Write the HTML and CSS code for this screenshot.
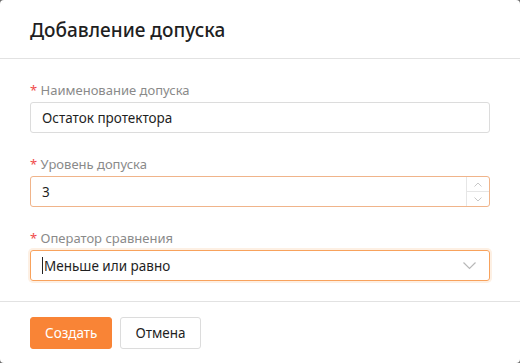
FILE: index.html
```html
<!DOCTYPE html>
<html>
<head>
	<title>Добавление допуска</title>
<link rel="stylesheet" href="styles.css">
</head>
<body>
	<div class="dialog">
		<div class="dialog-header">
			<h1>Добавление допуска</h1>
		</div>
		<div class="dialog-body">
			<div class="field">
				<label class="field-label"><span class="req">*</span> Наименование допуска</label>
				<div class="control">
					<input type="text" class="text-input" value="Остаток протектора">
				</div>
			</div>
			<div class="field">
				<label class="field-label"><span class="req">*</span> Уровень допуска</label>
				<div class="control control-number">
					<input type="text" class="text-input" value="3">
					<div class="spinner">
						<span class="spin-btn">
							<svg width="8" height="5" viewBox="0 0 8 5"><path d="M0.5 4.5 L4 1 L7.5 4.5" fill="none" stroke="#c8c8c8" stroke-width="1"/></svg>
						</span>
						<span class="spin-btn">
							<svg width="8" height="5" viewBox="0 0 8 5"><path d="M0.5 0.5 L4 4 L7.5 0.5" fill="none" stroke="#c8c8c8" stroke-width="1"/></svg>
						</span>
					</div>
				</div>
			</div>
			<div class="field">
				<label class="field-label"><span class="req">*</span> Оператор сравнения</label>
				<div class="control control-select">
					<div class="select-value"><span class="caret"></span>Меньше или равно</div>
					<svg class="chevron" width="13" height="8" viewBox="0 0 13 8"><path d="M0.5 0.5 L6.5 6.5 L12.5 0.5" fill="none" stroke="#b8b8b8" stroke-width="1.2"/></svg>
				</div>
			</div>
		</div>
		<div class="dialog-footer">
			<button class="btn btn-primary">Создать</button>
			<button class="btn btn-default">Отмена</button>
		</div>
	</div>
</body>
</html>
```

FILE: styles.css
```css
html, body {
	margin: 0;
	padding: 0;
	background: #6b6b6b;
}

body {
	font-family: "Noto Sans", "Open Sans", sans-serif;
	color: #222222;
}

.dialog {
	width: 520px;
	height: 363px;
	background: #ffffff;
	border-radius: 4px;
	display: flex;
	flex-direction: column;
	box-sizing: border-box;
}

.dialog-header {
	height: 59px;
	flex-shrink: 0;
	box-sizing: border-box;
	padding: 0 30px;
	display: flex;
	align-items: center;
	border-bottom: 1px solid #e2e2e2;
}

.dialog-header h1 {
	margin: 0;
	font-size: 19px;
	font-weight: 500;
	color: #1f1f1f;
	position: relative;
	top: 1px;
}

.dialog-body {
	padding: 22px 30px 0;
	height: 243px;
	flex-shrink: 0;
	box-sizing: border-box;
	border-bottom: 1px solid #e2e2e2;
}

.field {
	margin-bottom: 22px;
}

.field-label {
	display: block;
	font-size: 13px;
	color: #8a8a8a;
	line-height: 18px;
	margin-bottom: 3px;
}

.req {
	color: #f04b4b;
}

.control {
	position: relative;
	height: 31px;
	box-sizing: border-box;
	border: 1px solid #dcdcdc;
	border-radius: 3px;
	display: flex;
	align-items: center;
}

.text-input {
	flex: 1;
	min-width: 0;
	border: none;
	outline: none;
	height: 100%;
	padding: 0 11px;
	font-family: inherit;
	font-size: 13.5px;
	color: #1f1f1f;
	background: transparent;
}

.control-number {
	border-color: #f0b48a;
}

.spinner {
	width: 22px;
	height: 100%;
	border-left: 1px solid #e6e6e6;
	display: flex;
	flex-direction: column;
}

.spin-btn {
	flex: 1;
	display: flex;
	align-items: center;
	justify-content: center;
}

.spin-btn + .spin-btn {
	border-top: 1px solid #e6e6e6;
}

.control-select {
	border-color: #f8a25c;
	box-shadow: 0 0 0 2px #fdf0e4;
	justify-content: space-between;
}

.select-value {
	padding-left: 11px;
	font-size: 13.5px;
	color: #1f1f1f;
	display: flex;
	align-items: center;
}

.caret {
	width: 1px;
	height: 17px;
	background: #222222;
	margin-right: 1px;
}

.chevron {
	margin-right: 13px;
}

.dialog-footer {
	padding: 15px 30px 0;
	display: flex;
	gap: 8px;
}

.btn {
	height: 32px;
	box-sizing: border-box;
	padding: 0 14px;
	font-family: inherit;
	font-size: 13.5px;
	border-radius: 3px;
	cursor: pointer;
}

.btn-primary {
	background: #f98436;
	border: 1px solid #f98436;
	color: #ffffff;
}

.btn-default {
	background: #ffffff;
	border: 1px solid #dcdcdc;
	color: #1f1f1f;
}
```
